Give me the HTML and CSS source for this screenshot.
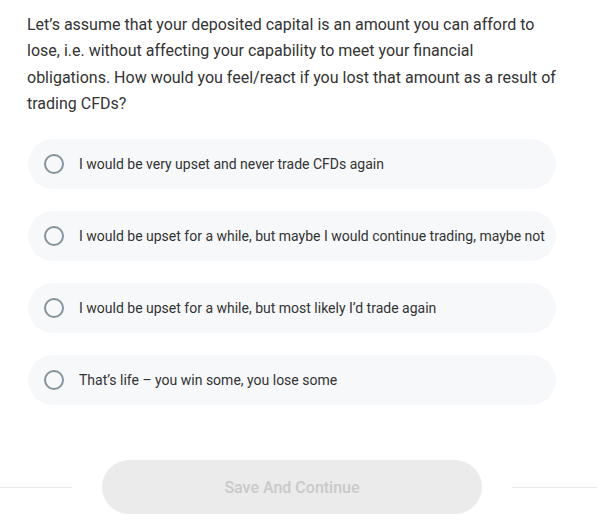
FILE: index.html
```html
<!DOCTYPE html>
<html lang="en">
<head>
<meta charset="utf-8">
<title>Question</title>
<link rel="stylesheet" href="styles.css">
</head>
<body>
<main class="page">
  <section class="question">
    <p class="question-text">Let’s assume that your deposited capital is an amount you can afford to lose, i.e. without affecting your capability to meet your financial obligations. How would you feel/react if you lost that amount as a result of trading CFDs?</p>
    <ul class="options">
      <li class="option"><span class="radio"></span><span class="option-label">I would be very upset and never trade CFDs again</span></li>
      <li class="option"><span class="radio"></span><span class="option-label">I would be upset for a while, but maybe I would continue trading, maybe not</span></li>
      <li class="option"><span class="radio"></span><span class="option-label">I would be upset for a while, but most likely I’d trade again</span></li>
      <li class="option"><span class="radio"></span><span class="option-label">That’s life – you win some, you lose some</span></li>
    </ul>
  </section>
  <footer class="actions">
    <span class="rule rule-left"></span>
    <button class="save-btn" type="button" disabled>Save And Continue</button>
    <span class="rule rule-right"></span>
  </footer>
</main>
</body>
</html>
```

FILE: styles.css
```css
* { box-sizing: border-box; }
html, body {
  margin: 0;
  padding: 0;
  background: #ffffff;
}
body {
  font-family: Roboto, "Liberation Sans", Arial, sans-serif;
  color: #333333;
}
.page {
  display: flex;
  flex-direction: column;
  padding-top: 12px;
}
.question {
  padding: 0 41px 0 27px;
}
.question-text {
  margin: 0;
  font-size: 16px;
  line-height: 26.3px;
  color: #333333;
}
.options {
  list-style: none;
  margin: 22px 0 0 1px;
  padding: 0;
  display: flex;
  flex-direction: column;
  gap: 22px;
}
.option {
  height: 50px;
  border-radius: 25px;
  background: #f7f8fa;
  display: flex;
  align-items: center;
  padding-left: 16px;
}
.radio {
  width: 20px;
  height: 20px;
  border: 2px solid #85939a;
  border-radius: 50%;
  flex: none;
  margin-right: 15px;
}
.option-label {
  font-size: 14px;
  color: #333333;
}
.actions {
  margin-top: 55px;
  display: flex;
  align-items: center;
}
.rule {
  height: 1px;
  background: #e9e9e9;
}
.rule-left {
  flex: 0 0 72px;
}
.rule-right {
  flex: 1;
}
.save-btn {
  margin: 0 30px;
  width: 380px;
  height: 54px;
  border: none;
  border-radius: 27px;
  background: #ebebeb;
  color: #c9c9c9;
  font-family: Roboto, "Liberation Sans", Arial, sans-serif;
  font-size: 16px;
  font-weight: 500;
}
```
